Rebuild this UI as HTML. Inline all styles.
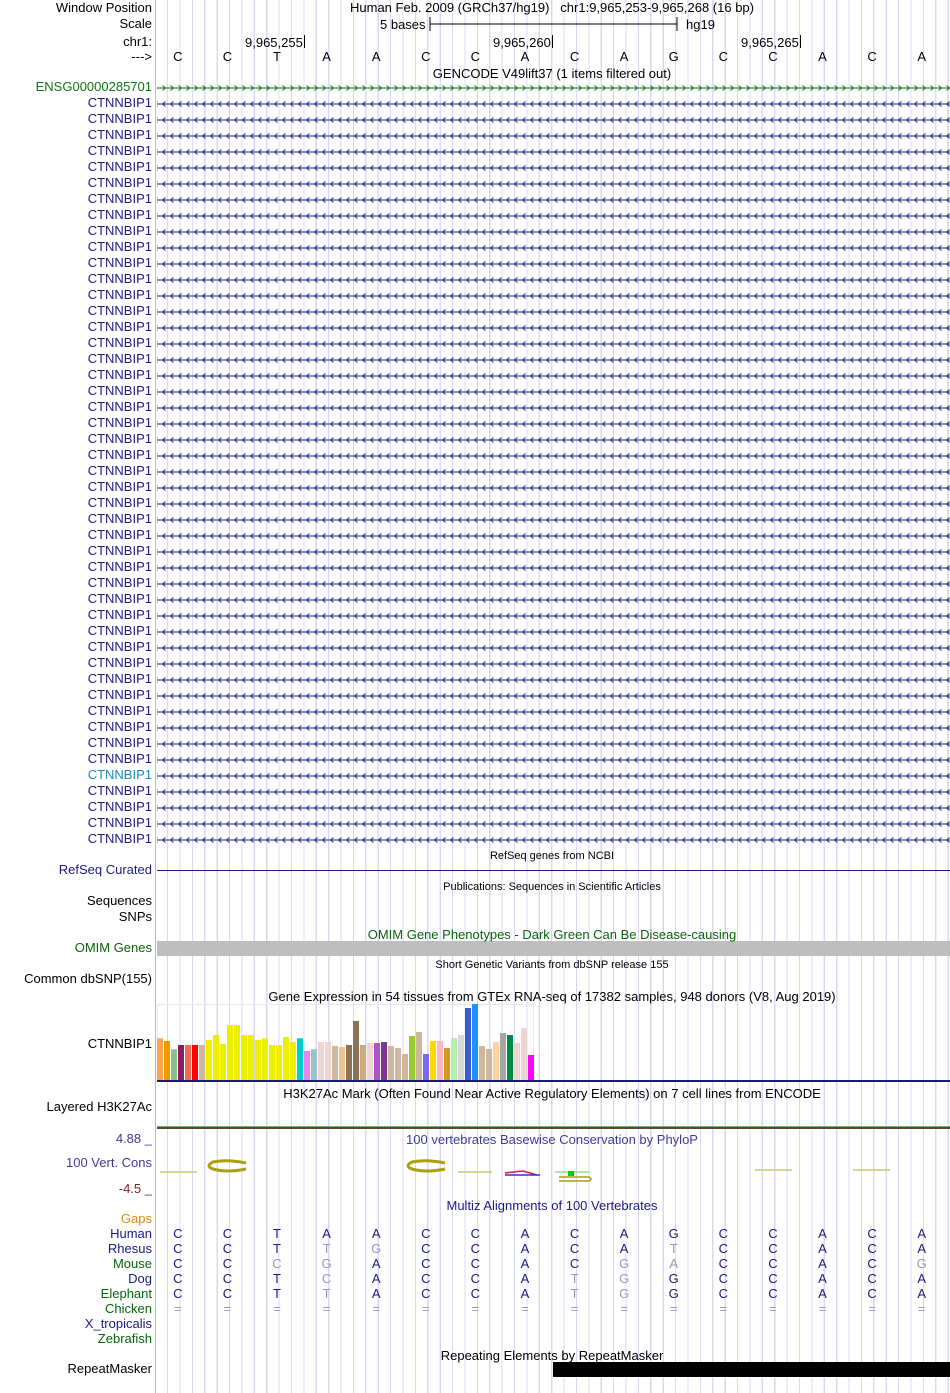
<!DOCTYPE html>
<html><head><meta charset="utf-8">
<style>
html,body{margin:0;padding:0;background:#fff;}
body{width:950px;height:1393px;position:relative;overflow:hidden;font-family:"Liberation Sans",Arial,sans-serif;font-size:13px;}
#grid{position:absolute;left:157px;top:0;width:793px;height:1393px;background:repeating-linear-gradient(90deg,transparent 0,transparent 10px,#d8d8f4 10px,#d8d8f4 11.2px,transparent 11.2px,transparent 12.39px);}
#sep{position:absolute;left:155px;top:0;width:1px;height:1393px;background:#f4a0a0;}
svg{position:absolute;left:157px;top:0;}
.l{position:absolute;right:798px;white-space:nowrap;line-height:16px;text-align:right;}
.t{position:absolute;white-space:nowrap;line-height:15px;}
.c{position:absolute;white-space:nowrap;line-height:15px;left:552px;transform:translateX(-50%);}
.s{font-size:11px;}
.row{position:absolute;left:153px;white-space:nowrap;line-height:15px;color:#1a1a80;}
.row span{display:inline-block;width:49.6px;text-align:center;}
.row span.m{color:#9898c0;}
</style></head><body>
<div id="grid"></div>
<div id="sep"></div>
<svg width="793" height="1393">
<defs>
<pattern id="pl" width="8" height="16" patternUnits="userSpaceOnUse" x="3" y="96"><line x1="0" y1="8" x2="8" y2="8" stroke="#1a1a80"/><path d="M5.5 5.5 L2.5 8 L5.5 10.5" fill="none" stroke="#1a1a80" stroke-width="0.9"/></pattern>
<pattern id="pr" width="8" height="16" patternUnits="userSpaceOnUse" x="3" y="80"><line x1="0" y1="8" x2="8" y2="8" stroke="#0a6e0a"/><path d="M2.5 5.5 L5.5 8 L2.5 10.5" fill="none" stroke="#0a6e0a" stroke-width="0.9"/></pattern>
</defs>
<line x1="273" y1="24" x2="520" y2="24" stroke="#000"/><line x1="273" y1="17" x2="273" y2="31" stroke="#000"/><line x1="520" y1="17" x2="520" y2="31" stroke="#000"/>
<line x1="147.5" y1="35" x2="147.5" y2="48" stroke="#000"/><line x1="395.5" y1="35" x2="395.5" y2="48" stroke="#000"/><line x1="643.5" y1="35" x2="643.5" y2="48" stroke="#000"/>
<rect x="0" y="80" width="793" height="16" fill="url(#pr)"/>
<rect x="0" y="96" width="793" height="752" fill="url(#pl)"/>
<line x1="0" y1="870.5" x2="793" y2="870.5" stroke="#1a1a80"/>
<rect x="0" y="941" width="793" height="15" fill="#bebebe"/>
<rect x="0.5" y="1004.5" width="376" height="76" fill="none" stroke="#e8e8e8"/>
<g>
<rect x="0" y="1038.3" width="6" height="41.7" fill="#FFA54F"/>
<rect x="7" y="1041" width="6" height="39" fill="#EE9A00"/>
<rect x="14" y="1049.3" width="6" height="30.7" fill="#8FBC8F"/>
<rect x="21" y="1045" width="6" height="35" fill="#8B1C62"/>
<rect x="28" y="1045" width="6" height="35" fill="#EE6A50"/>
<rect x="35" y="1045" width="6" height="35" fill="#FF0000"/>
<rect x="42" y="1045" width="6" height="35" fill="#CDB79E"/>
<rect x="49" y="1040" width="6" height="40" fill="#EEEE00"/>
<rect x="56" y="1035" width="6" height="45" fill="#EEEE00"/>
<rect x="63" y="1044" width="6" height="36" fill="#EEEE00"/>
<rect x="70" y="1025" width="6" height="55" fill="#EEEE00"/>
<rect x="77" y="1025" width="6" height="55" fill="#EEEE00"/>
<rect x="84" y="1035" width="6" height="45" fill="#EEEE00"/>
<rect x="91" y="1035" width="6" height="45" fill="#EEEE00"/>
<rect x="98" y="1040" width="6" height="40" fill="#EEEE00"/>
<rect x="105" y="1038.3" width="6" height="41.7" fill="#EEEE00"/>
<rect x="112" y="1045" width="6" height="35" fill="#EEEE00"/>
<rect x="119" y="1045" width="6" height="35" fill="#EEEE00"/>
<rect x="126" y="1037" width="6" height="43" fill="#EEEE00"/>
<rect x="133" y="1042" width="6" height="38" fill="#EEEE00"/>
<rect x="140" y="1038.3" width="6" height="41.7" fill="#00CDCD"/>
<rect x="147" y="1051" width="6" height="29" fill="#EE82EE"/>
<rect x="154" y="1049.3" width="6" height="30.7" fill="#9AC0CD"/>
<rect x="161" y="1042" width="6" height="38" fill="#EED5D2"/>
<rect x="168" y="1042" width="6" height="38" fill="#EED5D2"/>
<rect x="175" y="1046" width="6" height="34" fill="#CDB79E"/>
<rect x="182" y="1047" width="6" height="33" fill="#EEC591"/>
<rect x="189" y="1045" width="6" height="35" fill="#8B7355"/>
<rect x="196" y="1021" width="6" height="59" fill="#8B7355"/>
<rect x="203" y="1045" width="6" height="35" fill="#CDAA7D"/>
<rect x="210" y="1043" width="6" height="37" fill="#EED5D2"/>
<rect x="217" y="1043" width="6" height="37" fill="#B452CD"/>
<rect x="224" y="1042" width="6" height="38" fill="#7A378B"/>
<rect x="231" y="1046" width="6" height="34" fill="#CDB79E"/>
<rect x="238" y="1048" width="6" height="32" fill="#CDB79E"/>
<rect x="245" y="1054" width="6" height="26" fill="#CDB79E"/>
<rect x="252" y="1036" width="6" height="44" fill="#9ACD32"/>
<rect x="259" y="1032" width="6" height="48" fill="#CDB79E"/>
<rect x="266" y="1054" width="6" height="26" fill="#7B68EE"/>
<rect x="273" y="1041" width="6" height="39" fill="#FFD700"/>
<rect x="280" y="1041" width="6" height="39" fill="#FFB6C1"/>
<rect x="287" y="1048" width="6" height="32" fill="#CD9B1D"/>
<rect x="294" y="1038" width="6" height="42" fill="#B4EEB4"/>
<rect x="301" y="1035" width="6" height="45" fill="#D9D9D9"/>
<rect x="308" y="1008" width="6" height="72" fill="#3A5FCD"/>
<rect x="315" y="1004" width="6" height="76" fill="#1E90FF"/>
<rect x="322" y="1046" width="6" height="34" fill="#CDB79E"/>
<rect x="329" y="1049" width="6" height="31" fill="#CDB79E"/>
<rect x="336" y="1042" width="6" height="38" fill="#FFD39B"/>
<rect x="343" y="1033" width="6" height="47" fill="#A6A6A6"/>
<rect x="350" y="1035" width="6" height="45" fill="#008B45"/>
<rect x="357" y="1043" width="6" height="37" fill="#EED5D2"/>
<rect x="364" y="1028" width="6" height="52" fill="#EED5D2"/>
<rect x="371" y="1055" width="6" height="25" fill="#FF00FF"/>
</g>
<rect x="0" y="1080" width="793" height="2" fill="#1a1a6e"/>
<line x1="0" y1="1126.5" x2="793" y2="1126.5" stroke="#6fb06f"/>
<rect x="0" y="1127" width="793" height="2" fill="#5a4a2a"/>
<g stroke="#c8c870" stroke-width="1.5"><line x1="3" y1="1172" x2="40" y2="1172"/><line x1="301" y1="1172" x2="335" y2="1172"/><line x1="598" y1="1170" x2="635" y2="1170"/><line x1="696" y1="1170" x2="733" y2="1170"/></g>
<path d="M89 1163 Q70 1159 56 1162 Q48 1166 56 1169 Q70 1173 89 1169" fill="none" stroke="#a8a010" stroke-width="3"/>
<path d="M288 1163 Q269 1159 255 1162 Q247 1166 255 1169 Q269 1173 288 1169" fill="none" stroke="#a8a010" stroke-width="3"/>
<path d="M348 1173 L366 1171 L380 1175" fill="none" stroke="#e02020" stroke-width="1.5"/><line x1="348" y1="1175" x2="383" y2="1175" stroke="#3030e0" stroke-width="1.5"/>
<line x1="398" y1="1172" x2="432" y2="1172" stroke="#40e040"/><rect x="411" y="1171" width="6" height="5" fill="#00d000"/><path d="M402 1177 L432 1177 Q436 1179 432 1181 L402 1181" fill="none" stroke="#a8a010" stroke-width="1.5"/>
<rect x="396" y="1362" width="397" height="15" fill="#000"/>
</svg>

<div class="l" style="top:0px">Window Position<br>Scale</div>
<div class="l" style="top:34px">chr1:</div>
<div class="l" style="top:49px">---&gt;</div>
<div class="c" style="top:0px">Human Feb. 2009 (GRCh37/hg19)&nbsp;&nbsp;&nbsp;chr1:9,965,253-9,965,268 (16 bp)</div>
<div class="t" style="left:380px;top:17px">5 bases</div><div class="t" style="left:686px;top:17px">hg19</div>
<div class="t" style="left:245px;top:35px">9,965,255</div><div class="t" style="left:493px;top:35px">9,965,260</div><div class="t" style="left:741px;top:35px">9,965,265</div>
<div class="row" style="top:49px;color:#000"><span>C</span><span>C</span><span>T</span><span>A</span><span>A</span><span>C</span><span>C</span><span>A</span><span>C</span><span>A</span><span>G</span><span>C</span><span>C</span><span>A</span><span>C</span><span>A</span></div>
<div class="c" style="top:66px">GENCODE V49lift37 (1 items filtered out)</div>
<div class="l" style="top:79px;color:#0a780a">ENSG00000285701</div>
<div class="l" style="top:95px;color:#1a1a80">CTNNBIP1<br>CTNNBIP1<br>CTNNBIP1<br>CTNNBIP1<br>CTNNBIP1<br>CTNNBIP1<br>CTNNBIP1<br>CTNNBIP1<br>CTNNBIP1<br>CTNNBIP1<br>CTNNBIP1<br>CTNNBIP1<br>CTNNBIP1<br>CTNNBIP1<br>CTNNBIP1<br>CTNNBIP1<br>CTNNBIP1<br>CTNNBIP1<br>CTNNBIP1<br>CTNNBIP1<br>CTNNBIP1<br>CTNNBIP1<br>CTNNBIP1<br>CTNNBIP1<br>CTNNBIP1<br>CTNNBIP1<br>CTNNBIP1<br>CTNNBIP1<br>CTNNBIP1<br>CTNNBIP1<br>CTNNBIP1<br>CTNNBIP1<br>CTNNBIP1<br>CTNNBIP1<br>CTNNBIP1<br>CTNNBIP1<br>CTNNBIP1<br>CTNNBIP1<br>CTNNBIP1<br>CTNNBIP1<br>CTNNBIP1<br>CTNNBIP1<br><span style="color:#1a8cc0">CTNNBIP1</span><br>CTNNBIP1<br>CTNNBIP1<br>CTNNBIP1<br>CTNNBIP1</div>
<div class="c s" style="top:849px">RefSeq genes from NCBI</div>
<div class="l" style="top:862px;color:#1a1a80">RefSeq Curated</div>
<div class="c s" style="top:880px">Publications: Sequences in Scientific Articles</div>
<div class="l" style="top:893px">Sequences<br>SNPs</div>
<div class="c" style="top:927px;color:#0a640a">OMIM Gene Phenotypes - Dark Green Can Be Disease-causing</div>
<div class="l" style="top:940px;color:#0a640a">OMIM Genes</div>
<div class="c s" style="top:958px">Short Genetic Variants from dbSNP release 155</div>
<div class="l" style="top:971px">Common dbSNP(155)</div>
<div class="c" style="top:989px">Gene Expression in 54 tissues from GTEx RNA-seq of 17382 samples, 948 donors (V8, Aug 2019)</div>
<div class="l" style="top:1036px">CTNNBIP1</div>
<div class="c" style="top:1086px">H3K27Ac Mark (Often Found Near Active Regulatory Elements) on 7 cell lines from ENCODE</div>
<div class="l" style="top:1099px">Layered H3K27Ac</div>
<div class="c" style="top:1132px;color:#3c3c96">100 vertebrates Basewise Conservation by PhyloP</div>
<div class="l" style="top:1131px;color:#3c3c96">4.88 _</div>
<div class="l" style="top:1155px;color:#3c3c96">100 Vert. Cons</div>
<div class="l" style="top:1181px;color:#8b2020">-4.5 _</div>
<div class="c" style="top:1198px;color:#1a1a80">Multiz Alignments of 100 Vertebrates</div>
<div class="l" style="top:1211px;color:#e08a10;line-height:15px">Gaps</div>
<div class="l" style="top:1226px;line-height:15px;color:#1a1a80">Human<br>Rhesus<br><span style="color:#0a640a">Mouse</span><br>Dog<br><span style="color:#0a640a">Elephant</span><br><span style="color:#0a640a">Chicken</span><br>X_tropicalis<br><span style="color:#0a640a">Zebrafish</span></div>
<div class="row" style="top:1226px"><span>C</span><span>C</span><span>T</span><span>A</span><span>A</span><span>C</span><span>C</span><span>A</span><span>C</span><span>A</span><span>G</span><span>C</span><span>C</span><span>A</span><span>C</span><span>A</span></div>
<div class="row" style="top:1241px"><span>C</span><span>C</span><span>T</span><span class="m">T</span><span class="m">G</span><span>C</span><span>C</span><span>A</span><span>C</span><span>A</span><span class="m">T</span><span>C</span><span>C</span><span>A</span><span>C</span><span>A</span></div>
<div class="row" style="top:1256px"><span>C</span><span>C</span><span class="m">C</span><span class="m">G</span><span>A</span><span>C</span><span>C</span><span>A</span><span>C</span><span class="m">G</span><span class="m">A</span><span>C</span><span>C</span><span>A</span><span>C</span><span class="m">G</span></div>
<div class="row" style="top:1271px"><span>C</span><span>C</span><span>T</span><span class="m">C</span><span>A</span><span>C</span><span>C</span><span>A</span><span class="m">T</span><span class="m">G</span><span>G</span><span>C</span><span>C</span><span>A</span><span>C</span><span>A</span></div>
<div class="row" style="top:1286px"><span>C</span><span>C</span><span>T</span><span class="m">T</span><span>A</span><span>C</span><span>C</span><span>A</span><span class="m">T</span><span class="m">G</span><span>G</span><span>C</span><span>C</span><span>A</span><span>C</span><span>A</span></div>
<div class="row" style="top:1301px;color:#9898c0"><span>=</span><span>=</span><span>=</span><span>=</span><span>=</span><span>=</span><span>=</span><span>=</span><span>=</span><span>=</span><span>=</span><span>=</span><span>=</span><span>=</span><span>=</span><span>=</span></div>
<div class="c" style="top:1348px">Repeating Elements by RepeatMasker</div>
<div class="l" style="top:1361px">RepeatMasker</div>
</body></html>
